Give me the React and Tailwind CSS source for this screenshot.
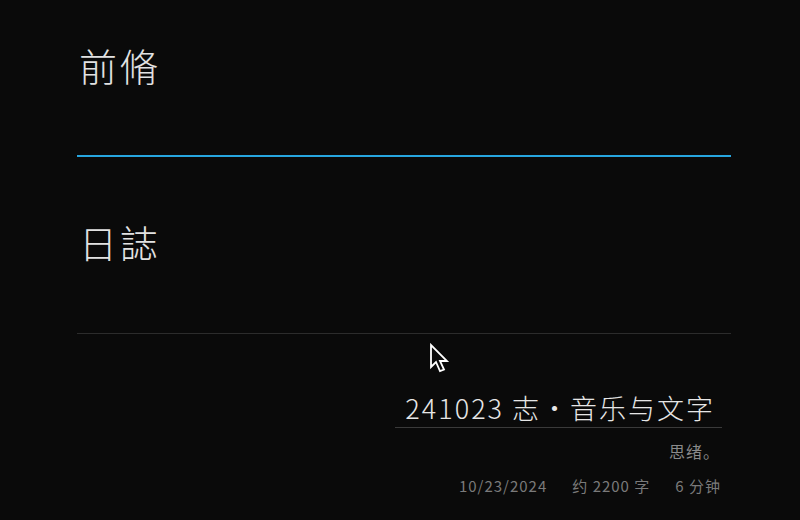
import React from "react";

const font = { fontFamily: '"Noto Sans CJK SC", "Noto Sans", sans-serif' };

function Cursor() {
  return (
    <svg width="22" height="32" viewBox="0 0 22 32" className="absolute left-[429px] top-[343px]">
      <path
        d="M2 2 L2 24 L7 19 L11 28 L15 26.5 L11 18 L18 18 Z"
        fill="#0a0a0a"
        stroke="#ffffff"
        strokeWidth="1.8"
        strokeLinejoin="miter"
      />
    </svg>
  );
}

export default function App() {
  return (
    <div className="relative w-[800px] h-[520px] overflow-hidden bg-[#0a0a0a]" style={font}>
      <div className="ml-[77px] w-[654px] flex flex-col">
        <div className="pt-[37px] h-[155px] px-[2px]">
          <h2 className="text-[38px] leading-[56px] font-light text-[#e2e2e2] tracking-[3px]">前脩</h2>
        </div>
        <div className="h-[2px] bg-[#27a6df]" />
        <div className="pt-[57px] h-[176px] px-[2px]">
          <h2 className="text-[38px] leading-[56px] font-light text-[#e2e2e2] tracking-[3px]">日誌</h2>
        </div>
        <div className="h-px bg-[#2c2c2c]" />
        <div className="ml-[318px] w-[327px] mt-[55px] flex flex-col items-end">
          <div className="w-full border-b border-[#3a3a3a] text-right pr-[7px] text-[27px] leading-[38px] font-light text-[#e6e6e6] tracking-[2px]">
            241023 志・音乐与文字
          </div>
          <div className="mt-[12px] pr-[2px] text-[16px] leading-[22px] text-[#8a8a8a] tracking-[1px]">思绪。</div>
          <div className="mt-[14px] pr-[1px] flex gap-[25px] text-[15px] leading-[20px] text-[#7a7a7a] tracking-[1px]">
            <span>10/23/2024</span>
            <span>约 2200 字</span>
            <span>6 分钟</span>
          </div>
        </div>
      </div>
      <Cursor />
    </div>
  );
}
